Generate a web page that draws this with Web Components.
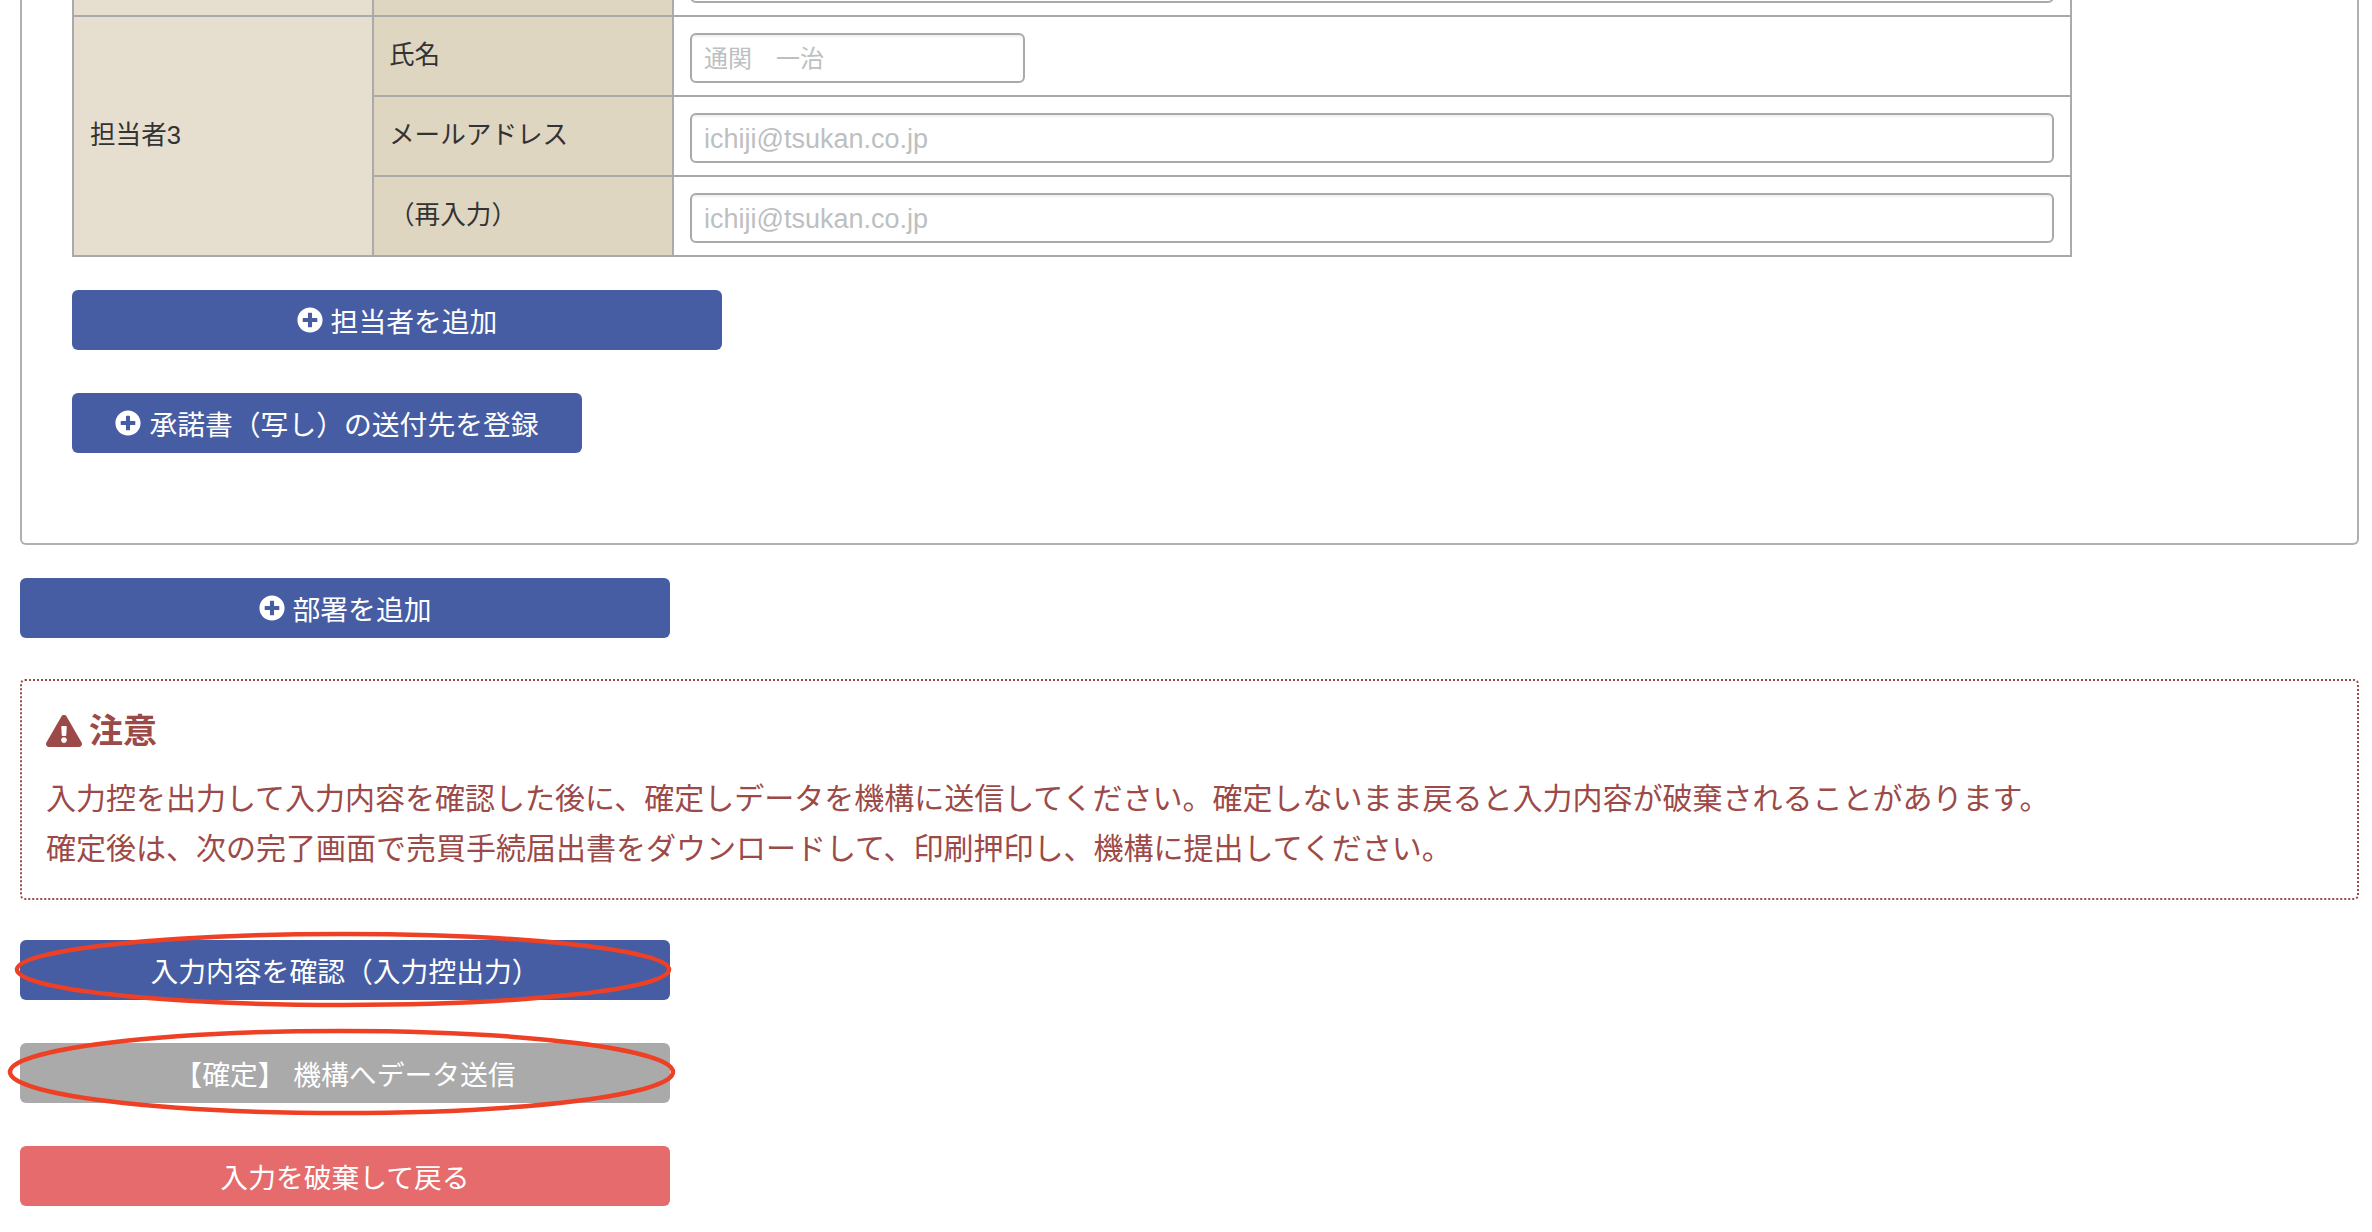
<!DOCTYPE html>
<html lang="ja">
<head>
<meta charset="utf-8">
<title>担当者登録</title>
<style>
  html, body { margin: 0; height: 1232px; overflow: hidden; background: #fff; }
  body { font-family: "Liberation Sans", "Noto Sans CJK JP", sans-serif; color: #333; }
  /* the shot was taken scrolled down, so the page starts above the window */
  .scrolled { margin-top: -65px; }
</style>
</head>
<body>
<div class="scrolled">
  <dept-panel>
    <contact-table></contact-table>
    <action-button kind="add" width="650">担当者を追加</action-button>
    <action-button kind="add" width="510" class="gap">承諾書（写し）の送付先を登録</action-button>
  </dept-panel>
  <page-actions>
    <action-button kind="add" width="650">部署を追加</action-button>
    <notice-box title-text="注意">
      <div>入力控を出力して入力内容を確認した後に、確定しデータを機構に送信してください。確定しないまま戻ると入力内容が破棄されることがあります。</div>
      <div>確定後は、次の完了画面で売買手続届出書をダウンロードして、印刷押印し、機構に提出してください。</div>
    </notice-box>
    <action-button width="650" ring="-5 -8 656 75">入力内容を確認（入力控出力）</action-button>
    <action-button width="650" color="grey" ring="-12 -14 667 86">【確定】 機構へデータ送信</action-button>
    <action-button width="650" color="red">入力を破棄して戻る</action-button>
  </page-actions>
</div>

<script>
const PLUS = `<svg viewBox="0 0 512 512" width="26" height="26" fill="currentColor"><path d="M256 8C119 8 8 119 8 256s111 248 248 248 248-111 248-248S393 8 256 8zm144 276c0 6.6-5.4 12-12 12h-92v92c0 6.6-5.4 12-12 12h-56c-6.6 0-12-5.4-12-12v-92h-92c-6.6 0-12-5.4-12-12v-56c0-6.6 5.4-12 12-12h92v-92c0-6.6 5.4-12 12-12h56c6.6 0 12 5.4 12 12v92h92c6.6 0 12 5.4 12 12v56z"/></svg>`
const WARN = `<svg viewBox="0 0 576 512" width="36" height="32" fill="currentColor"><path d="M569.517 440.013C587.975 472.007 564.806 512 527.94 512H48.054c-36.937 0-59.999-40.055-41.577-71.987L246.423 23.985c18.467-32.009 64.72-31.951 83.154 0l239.94 416.028zM288 354c-25.405 0-46 20.595-46 46s20.595 46 46 46 46-20.595 46-46-20.595-46-46-46zm-43.673-165.346l7.418 136c.347 6.364 5.609 11.346 11.982 11.346h48.546c6.373 0 11.635-4.982 11.982-11.346l7.418-136c.375-6.874-5.098-12.654-11.982-12.654h-63.383c-6.884 0-12.356 5.78-11.981 12.654z"/></svg>`
const COLORS = { blue: "#465da4", grey: "#aaaaaa", red: "#e66b6d" }

class DeptPanel extends HTMLElement {
    constructor() {
        super();
        this.attachShadow({ mode: 'open' }).innerHTML = `
          <style>
            :host { display: block; margin-left: 20px; width: 2339px; box-sizing: border-box;
                    border: 2px solid #b0b0b0; border-top: 0; border-radius: 0 0 6px 6px;
                    padding: 0 0 90px 50px; }
            ::slotted(.gap) { margin-top: 43px; }
          </style>
          <slot></slot>`
    }
}

class ContactTable extends HTMLElement {
    constructor() {
        super();
        this.attachShadow({ mode: 'open' }).innerHTML = `
          <style>
            :host { display: block; width: 2000px; margin-bottom: 33px; }
            table { border-collapse: collapse; width: 100%; table-layout: fixed; font-size: 25.6px; color: #333; }
            td { border: 2px solid #aaa; height: 74px; box-sizing: content-box; padding: 4px 16px 0; }
            .group, .label { height: 71px; padding: 0 15px 7px; }
            .group { background: #e6dfcf; padding-left: 16px; }
            .label { background: #dfd6c1; }
            col.a, col.b { width: 300px; }
          </style>
          <table>
            <colgroup><col class="a"><col class="b"><col></colgroup>
            <tr><td class="group"></td><td class="label"></td><td><text-field></text-field></td></tr>
            <tr>
              <td class="group" rowspan="3">担当者3</td>
              <td class="label">氏名</td>
              <td><text-field short size="24" placeholder="通関　一治"></text-field></td>
            </tr>
            <tr>
              <td class="label">メールアドレス</td>
              <td><text-field size="27" placeholder="ichiji@tsukan.co.jp"></text-field></td>
            </tr>
            <tr>
              <td class="label">（再入力）</td>
              <td><text-field size="27" placeholder="ichiji@tsukan.co.jp"></text-field></td>
            </tr>
          </table>`
    }
}

class TextField extends HTMLElement {
    constructor() {
        super();
        const size = this.getAttribute("size") || 27
        const ph = this.getAttribute("placeholder") || ""
        this.attachShadow({ mode: 'open' }).innerHTML = `
          <style>
            :host { display: block; }
            :host([short]) { width: 335px; }
            input { display: block; width: 100%; height: 50px; box-sizing: border-box; margin: 0;
                    border: 2px solid #aaa; border-radius: 6px; padding: 2px 12px 0; outline: 0;
                    box-shadow: inset 0 2px 2px rgba(0,0,0,.06); background: #fff;
                    font: ${size}px "Liberation Sans", "Noto Sans CJK JP", sans-serif; }
            input::placeholder { color: #bcc0c0; opacity: 1; }
          </style>
          <input type="text" placeholder="${ph}">`
    }
}

class ActionButton extends HTMLElement {
    constructor() {
        super();
        const width = this.getAttribute("width")
        const bg = COLORS[this.getAttribute("color") || "blue"]
        const icon = this.getAttribute("kind") == "add" ? PLUS : ""
        let ring = ""
        if (this.hasAttribute("ring")) {
            const [x, y, w, h] = this.getAttribute("ring").split(" ").map(Number)
            ring = `<svg class="ring" style="left:${x}px;top:${y}px" width="${w}" height="${h}">
                      <ellipse cx="${w / 2}" cy="${h / 2}" rx="${w / 2 - 2}" ry="${h / 2 - 2}" fill="none" stroke="#ee4024" stroke-width="4.5"/>
                    </svg>`
        }
        this.attachShadow({ mode: 'open' }).innerHTML = `
          <style>
            :host { display: block; position: relative; width: ${width}px; }
            button { display: flex; align-items: center; justify-content: center; gap: 8px;
                     width: 100%; height: 60px; padding: 0; border: 0; border-radius: 6px;
                     background: ${bg}; color: #fff; font: 27.8px "Liberation Sans", "Noto Sans CJK JP", sans-serif; }
            svg { display: block; flex: none; }
            .ring { position: absolute; pointer-events: none; overflow: visible; margin: 0; }
          </style>
          <button>${icon}<span><slot></slot></span></button>${ring}`
    }
}

class NoticeBox extends HTMLElement {
    constructor() {
        super();
        this.attachShadow({ mode: 'open' }).innerHTML = `
          <style>
            :host { display: block; box-sizing: border-box; width: 2339px; height: 221px;
                    border: 2px dotted #9c4a48; border-radius: 5px; padding: 25px 24px 0;
                    color: #9c4a48; font-size: 30px; line-height: 50px; }
            h4 { display: flex; align-items: center; gap: 7px; margin: 0 0 18px; font-size: 34px; line-height: 50px; font-weight: bold; }
          </style>
          <h4>${WARN}<span>${this.getAttribute("title-text")}</span></h4>
          <slot></slot>`
    }
}

class PageActions extends HTMLElement {
    constructor() {
        super();
        this.attachShadow({ mode: 'open' }).innerHTML = `
          <style>
            :host { display: flex; flex-direction: column; align-items: flex-start; padding: 33px 0 0 20px; }
            ::slotted(action-button) { margin-bottom: 43px; }
            ::slotted(notice-box) { margin-bottom: 40px; margin-top: -2px; }
          </style>
          <slot></slot>`
    }
}

customElements.define("dept-panel", DeptPanel);
customElements.define("text-field", TextField);
customElements.define("contact-table", ContactTable);
customElements.define("action-button", ActionButton);
customElements.define("notice-box", NoticeBox);
customElements.define("page-actions", PageActions);
</script>
</body>
</html>
